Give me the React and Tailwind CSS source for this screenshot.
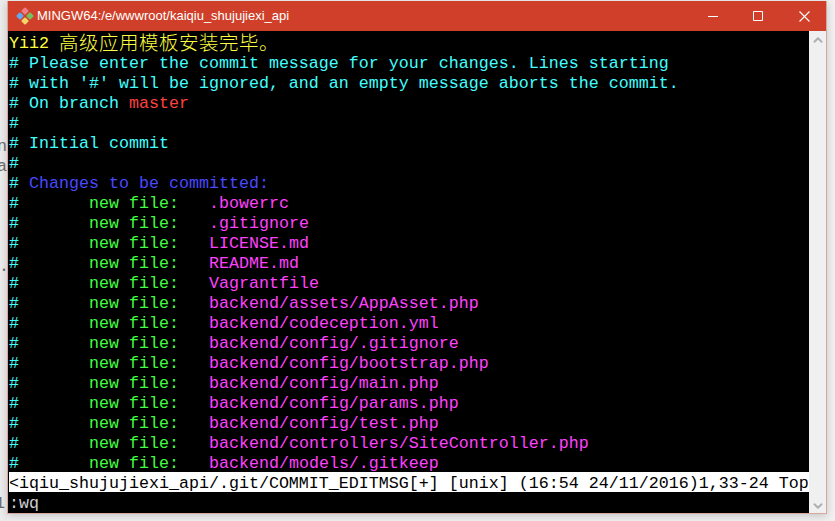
import React from 'react';
import { ChevronUp, ChevronDown } from 'lucide-react';

const CYAN = 'text-[#40ffff]';
const GREEN = 'text-[#40ff40]';
const PINK = 'text-[#ff40ff]';

const files = [
  '.bowerrc',
  '.gitignore',
  'LICENSE.md',
  'README.md',
  'Vagrantfile',
  'backend/assets/AppAsset.php',
  'backend/codeception.yml',
  'backend/config/.gitignore',
  'backend/config/bootstrap.php',
  'backend/config/main.php',
  'backend/config/params.php',
  'backend/config/test.php',
  'backend/controllers/SiteController.php',
  'backend/models/.gitkeep',
];

const Row = ({ children, className = '' }) => (
  <div className={`h-5 pt-1 leading-4 whitespace-pre ${className}`}>{children}</div>
);

const Logo = () => (
  <svg width="18" height="18" viewBox="0 0 18 18">
    <rect x="6.2" y="1.2" width="5.6" height="5.6" rx="1" transform="rotate(45 9 4)" fill="#ee7f86" />
    <rect x="1.2" y="6.2" width="5.6" height="5.6" rx="1" transform="rotate(45 4 9)" fill="#62a8f2" />
    <rect x="11.2" y="6.2" width="5.6" height="5.6" rx="1" transform="rotate(45 14 9)" fill="#74c05a" />
    <rect x="6.2" y="11.2" width="5.6" height="5.6" rx="1" transform="rotate(45 9 14)" fill="#f6d468" />
  </svg>
);

const App = () => {
  return (
    <div className="w-[835px] h-[521px] flex overflow-hidden bg-[#f0f0f0] font-['Liberation_Mono',monospace] text-[16.67px]">
      {/* bits of the page behind the window */}
      <div className="w-[7px] shrink-0 bg-[#ececec] overflow-hidden text-[#6b6b6b] pt-[137px] leading-5">
        <div className="-ml-[3px]">n</div>
        <div className="-ml-[3px]">a</div>
        <div className="mt-20 -ml-[1px]">.</div>
        <div className="mt-[217px] -ml-[5px]">1</div>
      </div>

      <div className="w-[820px] h-[513px] mt-px shrink-0 flex flex-col bg-[#f0f0f0] border-x border-b border-[#d9a79c] shadow-[0_2px_8px_rgba(0,0,0,0.18)]">
        <div className="h-[30px] shrink-0 bg-[#cf3f29] flex items-center pl-[8px] text-white">
          <Logo />
          <span className="ml-[3px] font-['Liberation_Sans',sans-serif] text-[13px]">MINGW64:/e/wwwroot/kaiqiu_shujujiexi_api</span>
          <div className="ml-auto flex items-center">
            <div className="w-[42px] flex justify-center">
              <svg width="10" height="10" viewBox="0 0 10 10"><path d="M0 5.5H10" stroke="white" strokeWidth="1" /></svg>
            </div>
            <div className="w-[48px] flex justify-center">
              <svg width="10" height="10" viewBox="0 0 10 10"><path d="M0.5 0.5H9.5V9.5H0.5Z" fill="none" stroke="white" strokeWidth="1" /></svg>
            </div>
            <div className="w-[44px] flex justify-center">
              <svg width="11" height="11" viewBox="0 0 11 11"><path d="M0.5 0.5L10.5 10.5M10.5 0.5L0.5 10.5" stroke="white" strokeWidth="1.1" /></svg>
            </div>
          </div>
        </div>

        <div className="flex flex-1 min-h-0">
          <div className="w-[802px] bg-black pt-px pl-px text-[#d0d0d0]">
            <div className="h-5 flex whitespace-pre text-[#ffff40]">
              <span className="pt-1 leading-4">Yii2 </span>
              <span className="font-['Noto_Sans_CJK_SC',sans-serif] text-[19.5px] leading-5 tracking-[0.5px] font-light">高级应用模板安装完毕。</span>
            </div>
            <Row className={CYAN}># Please enter the commit message for your changes. Lines starting</Row>
            <Row className={CYAN}># with '#' will be ignored, and an empty message aborts the commit.</Row>
            <Row className={CYAN}># On branch <span className="text-[#ff4040]">master</span></Row>
            <Row className={CYAN}>#</Row>
            <Row className={CYAN}># Initial commit</Row>
            <Row className={CYAN}>#</Row>
            <Row className={CYAN}># <span className="text-[#4848ff]">Changes to be committed:</span></Row>
            {files.map((f) => (
              <Row key={f} className={CYAN}>#       <span className={GREEN}>new file:</span>   <span className={PINK}>{f}</span></Row>
            ))}
            <Row className="bg-white text-black">{'<iqiu_shujujiexi_api/.git/COMMIT_EDITMSG[+] [unix] (16:54 24/11/2016)1,33-24 Top'}</Row>
            <Row>:wq</Row>
          </div>

          <div className="w-[17px] bg-[#f0f0f0] flex flex-col items-center justify-between pt-0.5 text-[#b0b0b0]">
            <ChevronUp size={14} strokeWidth={3.5} />
            <ChevronDown size={14} strokeWidth={3.5} />
          </div>
        </div>
      </div>
    </div>
  );
};

export default App;
